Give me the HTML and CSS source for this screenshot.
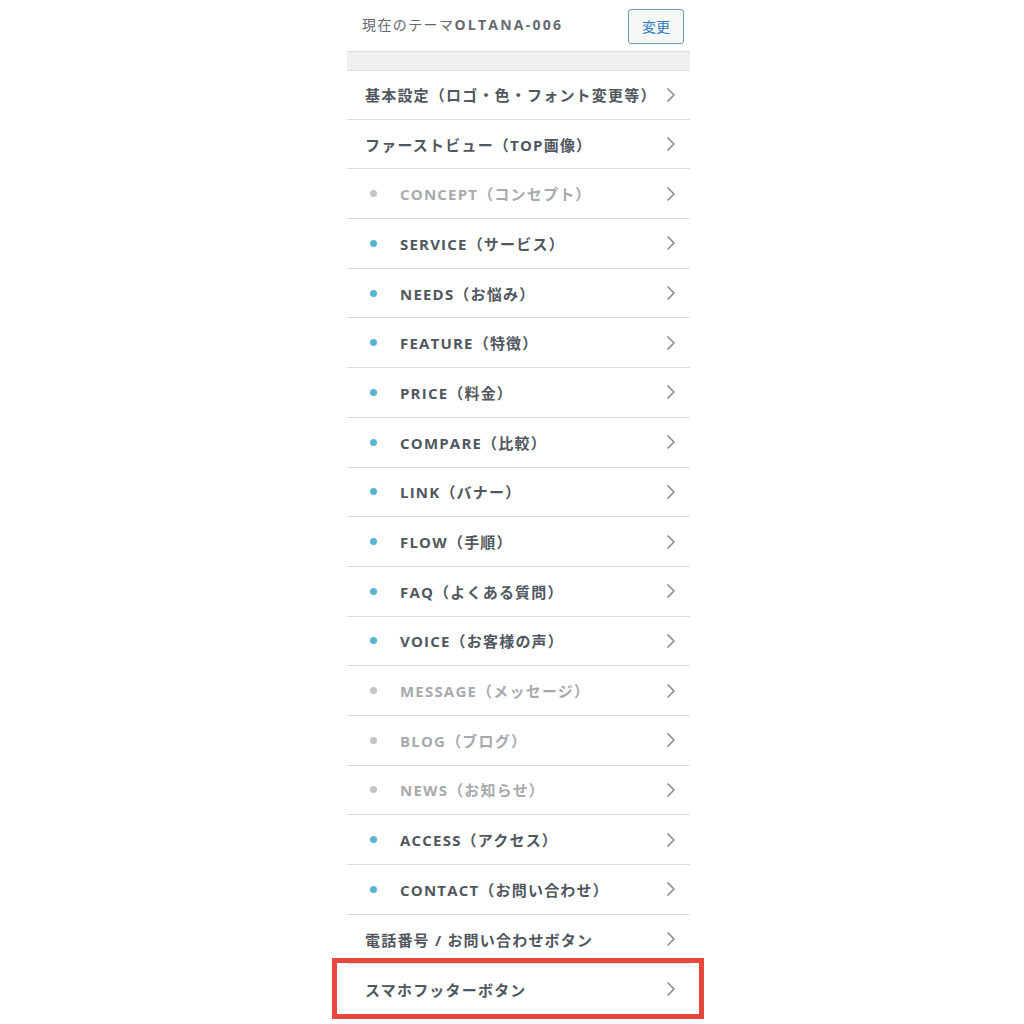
FILE: index.html
```html
<!DOCTYPE html>
<html lang="ja">
<head>
<meta charset="utf-8">
<title>テーマ設定</title>
<link rel="stylesheet" href="styles.css">
</head>
<body>
<div class="panel">
  <div class="header">
    <div class="theme">現在のテーマ<b>OLTANA-006</b></div>
    <button class="change">変更</button>
  </div>
  <div class="band"></div>
  <ul class="menu">
    <li class="row"><span class="label">基本設定（ロゴ・色・フォント変更等）</span><svg class="chev" viewBox="0 0 10 16"><polyline points="2,2 8,8 2,14"/></svg></li>
    <li class="row"><span class="label">ファーストビュー（TOP画像）</span><svg class="chev" viewBox="0 0 10 16"><polyline points="2,2 8,8 2,14"/></svg></li>
    <li class="row sub off"><span class="dot"></span><span class="label">CONCEPT（コンセプト）</span><svg class="chev" viewBox="0 0 10 16"><polyline points="2,2 8,8 2,14"/></svg></li>
    <li class="row sub"><span class="dot"></span><span class="label">SERVICE（サービス）</span><svg class="chev" viewBox="0 0 10 16"><polyline points="2,2 8,8 2,14"/></svg></li>
    <li class="row sub"><span class="dot"></span><span class="label">NEEDS（お悩み）</span><svg class="chev" viewBox="0 0 10 16"><polyline points="2,2 8,8 2,14"/></svg></li>
    <li class="row sub"><span class="dot"></span><span class="label">FEATURE（特徴）</span><svg class="chev" viewBox="0 0 10 16"><polyline points="2,2 8,8 2,14"/></svg></li>
    <li class="row sub"><span class="dot"></span><span class="label">PRICE（料金）</span><svg class="chev" viewBox="0 0 10 16"><polyline points="2,2 8,8 2,14"/></svg></li>
    <li class="row sub"><span class="dot"></span><span class="label">COMPARE（比較）</span><svg class="chev" viewBox="0 0 10 16"><polyline points="2,2 8,8 2,14"/></svg></li>
    <li class="row sub"><span class="dot"></span><span class="label">LINK（バナー）</span><svg class="chev" viewBox="0 0 10 16"><polyline points="2,2 8,8 2,14"/></svg></li>
    <li class="row sub"><span class="dot"></span><span class="label">FLOW（手順）</span><svg class="chev" viewBox="0 0 10 16"><polyline points="2,2 8,8 2,14"/></svg></li>
    <li class="row sub"><span class="dot"></span><span class="label">FAQ（よくある質問）</span><svg class="chev" viewBox="0 0 10 16"><polyline points="2,2 8,8 2,14"/></svg></li>
    <li class="row sub"><span class="dot"></span><span class="label">VOICE（お客様の声）</span><svg class="chev" viewBox="0 0 10 16"><polyline points="2,2 8,8 2,14"/></svg></li>
    <li class="row sub off"><span class="dot"></span><span class="label">MESSAGE（メッセージ）</span><svg class="chev" viewBox="0 0 10 16"><polyline points="2,2 8,8 2,14"/></svg></li>
    <li class="row sub off"><span class="dot"></span><span class="label">BLOG（ブログ）</span><svg class="chev" viewBox="0 0 10 16"><polyline points="2,2 8,8 2,14"/></svg></li>
    <li class="row sub off"><span class="dot"></span><span class="label">NEWS（お知らせ）</span><svg class="chev" viewBox="0 0 10 16"><polyline points="2,2 8,8 2,14"/></svg></li>
    <li class="row sub"><span class="dot"></span><span class="label">ACCESS（アクセス）</span><svg class="chev" viewBox="0 0 10 16"><polyline points="2,2 8,8 2,14"/></svg></li>
    <li class="row sub"><span class="dot"></span><span class="label">CONTACT（お問い合わせ）</span><svg class="chev" viewBox="0 0 10 16"><polyline points="2,2 8,8 2,14"/></svg></li>
    <li class="row"><span class="label">電話番号 / お問い合わせボタン</span><svg class="chev" viewBox="0 0 10 16"><polyline points="2,2 8,8 2,14"/></svg></li>
    <li class="row highlight"><span class="label">スマホフッターボタン</span><svg class="chev" viewBox="0 0 10 16"><polyline points="2,2 8,8 2,14"/></svg></li>
  </ul>
</div>
</body>
</html>
```

FILE: styles.css
```css
html, body {
  margin: 0;
  padding: 0;
  background: #ffffff;
}

body {
  font-family: "Open Sans", "Noto Sans CJK JP", sans-serif;
  color: #50575e;
  min-height: 1024px;
}

.panel {
  width: 343px;
  margin-left: 347px;
  padding-bottom: 9px;
  background: #ffffff;
}

.header {
  height: 52px;
  box-sizing: border-box;
  display: flex;
  align-items: center;
  justify-content: space-between;
  padding: 0 6px 0 15px;
  border-bottom: 1px solid #dcdcde;
}

.theme {
  font-size: 14px;
  letter-spacing: 0.1em;
  color: #646970;
  margin-top: -4px;
}

.theme b {
  font-weight: 700;
  letter-spacing: 0.16em;
}

.change {
  width: 56px;
  height: 35px;
  margin-top: 1px;
  border: 1px solid #7199c8;
  border-radius: 3px;
  background: #f6f7f7;
  color: #2f78bb;
  font-family: "Noto Sans CJK JP", sans-serif;
  font-size: 14px;
  padding: 0;
}

.band {
  height: 18px;
  background: #f0f0f1;
}

.menu {
  list-style: none;
  margin: 0;
  padding: 0;
}

.row {
  position: relative;
  height: 49.7px;
  box-sizing: border-box;
  border-bottom: 1px solid #dcdcde;
  display: flex;
  align-items: center;
  padding: 0 14px 0 18px;
  font-size: 15px;
  font-weight: 700;
  letter-spacing: 0.08em;
  color: #50575e;
}

.row:first-child {
  border-top: 1px solid #dcdcde;
}

.row.sub {
  padding-left: 23px;
}

.dot {
  width: 7px;
  height: 7px;
  border-radius: 50%;
  background: #5ab4d1;
  margin-right: 23px;
  flex: none;
}

.row.off {
  color: #a7aaad;
}

.row.off .dot {
  background: #c3c4c7;
}

.label {
  flex: 1;
  white-space: nowrap;
}

.chev {
  width: 10px;
  height: 16px;
  flex: none;
}

.chev polyline {
  fill: none;
  stroke: #8c8f94;
  stroke-width: 1.7;
  stroke-linecap: round;
  stroke-linejoin: round;
}

.highlight {
  border-bottom: none;
}

.highlight::after {
  content: "";
  position: absolute;
  left: -15px;
  right: -14px;
  top: -6px;
  bottom: -5px;
  border: 5px solid #e8473d;
}
```
